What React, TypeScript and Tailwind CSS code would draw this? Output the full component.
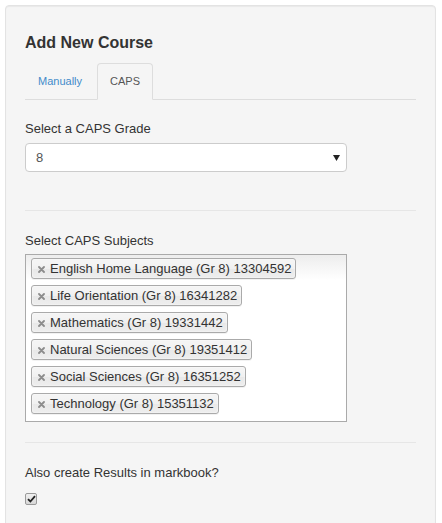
const subjects = [
  'English Home Language (Gr 8) 13304592',
  'Life Orientation (Gr 8) 16341282',
  'Mathematics (Gr 8) 19331442',
  'Natural Sciences (Gr 8) 19351412',
  'Social Sciences (Gr 8) 16351252',
  'Technology (Gr 8) 15351132',
];

function CloseIcon() {
  return (
    <svg width="7" height="7" viewBox="0 0 7 7" className="absolute left-[6px] top-[7px]">
      <path d="M1 1 L6 6 M6 1 L1 6" stroke="#8c8c8c" strokeWidth="1.8" strokeLinecap="round" />
    </svg>
  );
}

function SubjectTag({ label }: { label: string }) {
  return (
    <li className="relative my-[3px] ml-[5px] w-fit rounded-[3px] border border-[#aaaaaa] bg-[linear-gradient(to_bottom,#f4f4f4_20%,#f0f0f0_50%,#e8e8e8_52%,#eeeeee_100%)] pl-[18px] pr-[4px] py-[3px] text-[13px] leading-[13px] text-[#333] shadow-[inset_0_0_2px_#fff,0_1px_0_rgba(0,0,0,0.05)]">
      <CloseIcon />
      {label}
    </li>
  );
}

export default function App() {
  return (
    <div className="min-h-screen bg-white font-['Liberation_Sans',Arial,sans-serif]">
      <div className="ml-[5px] mt-[5px] w-[431px] rounded-[4px] border border-[#e3e3e3] bg-[#f5f5f5] px-[19px] pt-[28px] pb-[30px] shadow-[inset_0_1px_1px_rgba(0,0,0,0.05)]">
        <h3 className="mb-[11px] text-[16px] font-bold leading-[18px] text-[#333]">Add New Course</h3>

        <ul className="flex border-b border-[#dddddd]">
          <li className="mr-[2px] -mb-px">
            <span className="block rounded-t-[4px] border border-transparent px-[12px] py-[10px] text-[11px] leading-[15px] text-[#428bca]">
              Manually
            </span>
          </li>
          <li className="-mb-px">
            <span className="block rounded-t-[4px] border border-[#dddddd] border-b-[#f5f5f5] bg-[#f5f5f5] px-[12px] py-[10px] text-[11px] leading-[15px] text-[#555]">
              CAPS
            </span>
          </li>
        </ul>

        <label className="mt-[19px] mb-[5px] block text-[13px] leading-[19px] text-[#333]">Select a CAPS Grade</label>
        <div className="flex h-[29px] w-[322px] items-center justify-between rounded-[4px] border border-[#cccccc] bg-white pl-[10px] pr-[6px] text-[13px] text-[#555]">
          <span>8</span>
          <svg width="7" height="6" viewBox="0 0 7 6">
            <path d="M0 0 L7 0 L3.5 6 Z" fill="#222" />
          </svg>
        </div>

        <hr className="mt-[38px] border-0 border-t border-[#e6e6e6]" />

        <label className="mt-[20px] mb-[4px] block text-[13px] leading-[19px] text-[#333]">Select CAPS Subjects</label>
        <ul className="flex h-[168px] w-[322px] flex-col border border-[#aaaaaa] bg-[linear-gradient(to_bottom,#eeeeee_1%,#ffffff_15%)]">
          {subjects.map((s) => (
            <SubjectTag key={s} label={s} />
          ))}
        </ul>

        <hr className="mt-[20px] border-0 border-t border-[#e6e6e6]" />

        <label className="mt-[20px] block text-[13px] leading-[19px] text-[#333]">Also create Results in markbook?</label>
        <div className="mt-[11px] flex h-[12px] w-[12px] items-center justify-center rounded-[2px] border border-[#9a9a9a] bg-[linear-gradient(to_bottom,#f0f0f0,#d8d8d8)]">
          <svg width="9" height="8" viewBox="0 0 9 8">
            <path d="M1 4.2 L3.4 6.5 L8 1.2" stroke="#222" strokeWidth="1.8" fill="none" />
          </svg>
        </div>
      </div>
    </div>
  );
}
